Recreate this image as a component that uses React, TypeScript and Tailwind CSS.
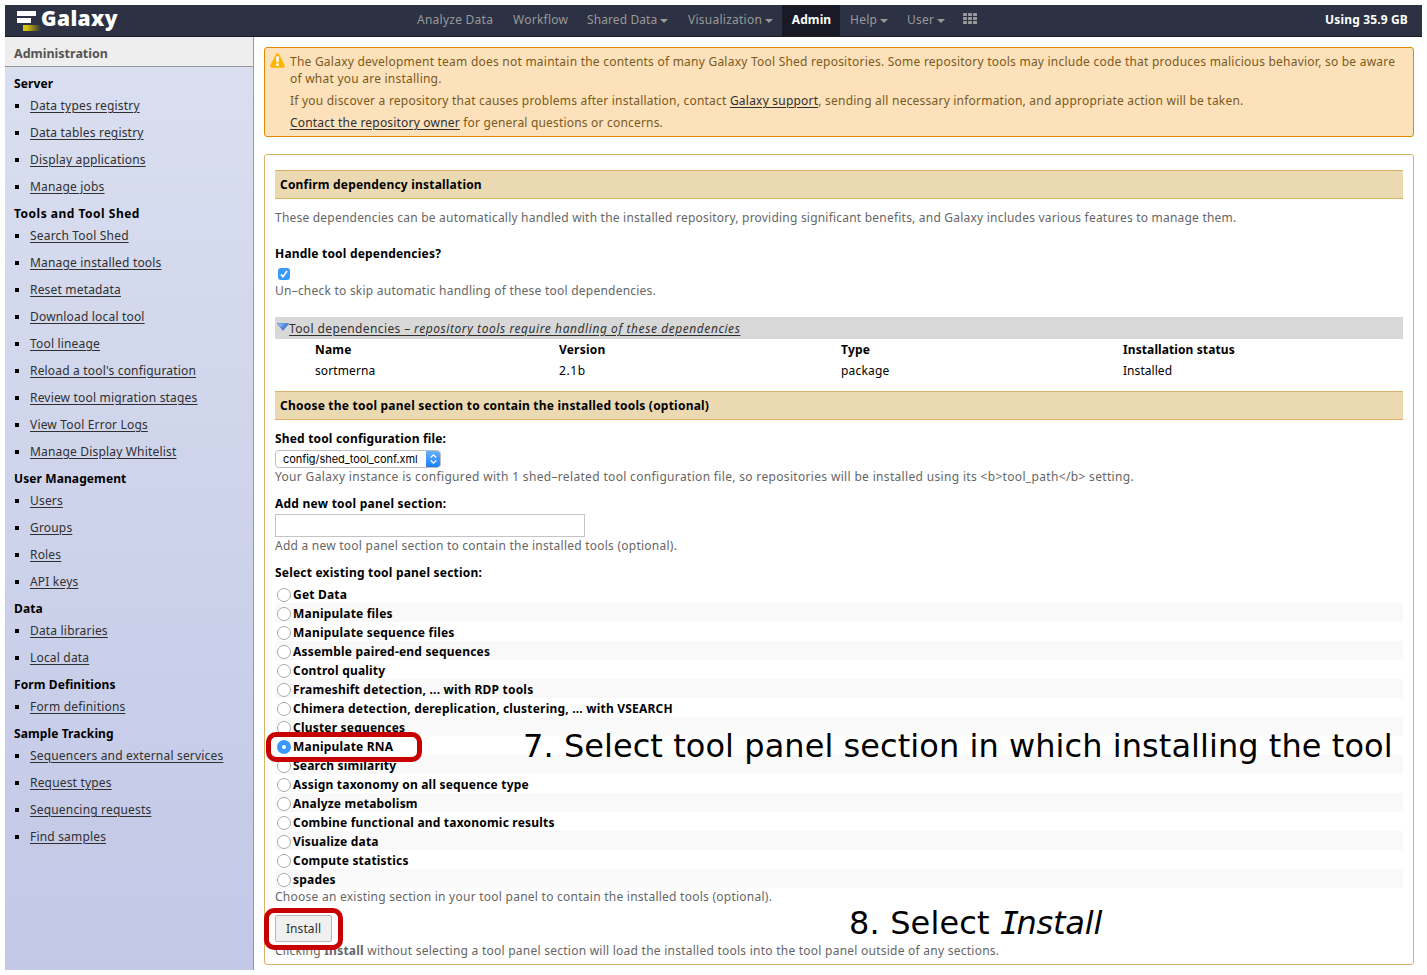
import React from "react";

const sections: { title: string; items: string[] }[] = [
  { title: "Server", items: ["Data types registry", "Data tables registry", "Display applications", "Manage jobs"] },
  {
    title: "Tools and Tool Shed",
    items: [
      "Search Tool Shed",
      "Manage installed tools",
      "Reset metadata",
      "Download local tool",
      "Tool lineage",
      "Reload a tool's configuration",
      "Review tool migration stages",
      "View Tool Error Logs",
      "Manage Display Whitelist",
    ],
  },
  { title: "User Management", items: ["Users", "Groups", "Roles", "API keys"] },
  { title: "Data", items: ["Data libraries", "Local data"] },
  { title: "Form Definitions", items: ["Form definitions"] },
  {
    title: "Sample Tracking",
    items: ["Sequencers and external services", "Request types", "Sequencing requests", "Find samples"],
  },
];

const panelSections = [
  "Get Data",
  "Manipulate files",
  "Manipulate sequence files",
  "Assemble paired-end sequences",
  "Control quality",
  "Frameshift detection, ... with RDP tools",
  "Chimera detection, dereplication, clustering, ... with VSEARCH",
  "Cluster sequences",
  "Manipulate RNA",
  "Search similarity",
  "Assign taxonomy on all sequence type",
  "Analyze metabolism",
  "Combine functional and taxonomic results",
  "Visualize data",
  "Compute statistics",
  "spades",
];

const link = "text-[#303030] underline underline-offset-2 decoration-1";

function Caret() {
  return (
    <span className="mt-[2px] ml-[3px] h-0 w-0 border-x-[4px] border-t-4 border-x-transparent border-t-[#999]" />
  );
}

function Logo() {
  return (
    <svg width="26" height="22" viewBox="0 0 26 22" className="mt-[5px] ml-[11px] shrink-0">
      <defs>
        <linearGradient id="gold" x1="0" x2="1">
          <stop offset="0.2" stopColor="#d6c40a" />
          <stop offset="1" stopColor="#2c3143" />
        </linearGradient>
      </defs>
      <rect x="1" y="1" width="19" height="5" fill="#fff" />
      <rect x="1" y="8" width="14" height="5" fill="#fff" />
      <rect x="7" y="15" width="18" height="6" fill="url(#gold)" />
    </svg>
  );
}

function Masthead() {
  return (
    <header className="flex h-8 shrink-0 border-b border-[#191a26] bg-[#2c3143] text-[#999]">
      <div className="flex w-[400px]">
        <Logo />
        <span className="-mt-px -ml-px font-['Open_Sans'] text-[21px] leading-[29px] font-extrabold tracking-[0.4px] text-white">
          Galaxy
        </span>
      </div>
      <nav className="flex text-[12px] leading-[30px] tracking-[0.25px]">
        <span className="w-[96px] pl-3">Analyze Data</span>
        <span className="w-[74px] pl-3">Workflow</span>
        <span className="flex h-[30px] w-[100px] items-center pl-3 tracking-[0.1px]">Shared Data<Caret /></span>
        <span className="flex h-[30px] w-[107px] items-center pl-[13px]">Visualization<Caret /></span>
        <span className="h-[31px] w-[58px] bg-[#191a26] pl-px text-center font-bold tracking-[0.1px] text-white">
          Admin
        </span>
        <span className="flex h-[30px] w-[57px] items-center pl-[10px]">Help<Caret /></span>
        <span className="flex h-[30px] w-[55px] items-center pl-[10px]">User<Caret /></span>
        <svg width="15" height="12" viewBox="0 0 15 12" className="mt-2 ml-[11px]" fill="#999">
          {[0, 5, 10].map((x) =>
            [0, 4, 8].map((y) => <rect key={`${x}-${y}`} x={x} y={y} width="4" height="3" rx="0.5" />),
          )}
        </svg>
      </nav>
      <span className="ml-auto pr-[14px] text-[12px] leading-[30px] font-bold tracking-[0.15px] text-white">
        Using 35.9 GB
      </span>
    </header>
  );
}

function Sidebar() {
  return (
    <aside className="flex w-[249px] shrink-0 flex-col border-r border-[#999] bg-linear-to-b from-[#dadff0] to-[#c2c8e6]">
      <div className="h-[30px] shrink-0 border-b border-[#999] bg-[#eee] pl-[9px] text-[12.5px] leading-[33px] font-bold text-[#555]">
        Administration
      </div>
      <div className="pt-[6px] pl-[9px] leading-[22px]">
        {sections.map((s) => (
          <div key={s.title}>
            <h2 className={s.title.startsWith("Tools") ? "font-bold tracking-[0.5px]" : "font-bold tracking-[0.1px]"}>
              {s.title}
            </h2>
            <ul className="tracking-[0.18px]">
              {s.items.map((i) => (
                <li key={i} className="mb-[5px] flex h-[22px] items-center">
                  <span className="mr-[11px] ml-px size-1 bg-black" />
                  <a className={link}>{i}</a>
                </li>
              ))}
            </ul>
          </div>
        ))}
      </div>
    </aside>
  );
}

function Warning() {
  return (
    <div className="flex h-[90px] rounded-[3px] border border-[#e08b00] bg-[#fce1ba] leading-[17px] tracking-[0.215px] text-[#7a5a21]">
      <svg width="15" height="15" viewBox="0 0 15 15" className="mt-[5px] ml-[5px] shrink-0">
        <path
          d="M7.5 0.3c.8 0 1.3.4 1.7 1.1l5.2 10c.8 1.6.3 3.3-1.4 3.3H2c-1.7 0-2.2-1.7-1.4-3.3l5.2-10C6.2.7 6.7.3 7.5.3z"
          fill="#ffb400"
        />
        <path d="M6 3.5h3l-.3 5.8H6.3zM6.2 10.6h2.6v2.4H6.2z" fill="#fff" />
      </svg>
      <div className="pt-[5px] pl-[5px] whitespace-nowrap">
        <p className="tracking-[0.232px]">
          The Galaxy development team does not maintain the contents of many Galaxy Tool Shed repositories. Some
          repository tools may include code that produces malicious behavior, so be aware
          <br />
          of what you are installing.
        </p>
        <p className="mt-[5px]">
          If you discover a repository that causes problems after installation, contact{" "}
          <a className={link}>Galaxy support</a>, sending all necessary information, and appropriate action will be
          taken.
        </p>
        <p className="mt-[5px] tracking-[0.19px]">
          <a className={link}>Contact the repository owner</a> for general questions or concerns.
        </p>
      </div>
    </div>
  );
}

function TitleBar({ children }: { children: React.ReactNode }) {
  return (
    <h3 className="h-[29px] border-y border-[#d8b365] bg-[#ebd9b2] pl-[5px] leading-[27px] font-bold">{children}</h3>
  );
}

function Radio({ checked }: { checked: boolean }) {
  return checked ? (
    <span className="mt-[2px] mr-[2px] ml-[2px] flex size-[14px] items-center justify-center rounded-full bg-[#3b99fc]">
      <span className="size-1 rounded-full bg-white" />
    </span>
  ) : (
    <span className="mt-[2px] mr-[2px] ml-[2px] size-[14px] rounded-full border border-[#aaa] bg-white" />
  );
}

function InstallForm() {
  return (
    <div className="mt-[17px] h-[811px] rounded-[3px] border border-[#d8b365] px-[10px] pt-[15px] leading-[18px] tracking-[0.2px]">
      <TitleBar>Confirm dependency installation</TitleBar>
      <p className="mt-[10px] tracking-[0.213px] text-[#666]">
        These dependencies can be automatically handled with the installed repository, providing significant benefits,
        and Galaxy includes various features to manage them.
      </p>
      <h4 className="mt-[18px] font-bold">Handle tool dependencies?</h4>
      <div className="mt-[5px] ml-[3px] flex size-3 items-center justify-center rounded-[3px] bg-[#3b99fc]">
        <svg width="8" height="8" viewBox="0 0 8 8" fill="none" stroke="#fff" strokeWidth="1.6">
          <path d="M0.9 4.4l2.1 2.300L7 1" />
        </svg>
      </div>
      <p className="mt-[2px] tracking-[0.23px] text-[#666]">
        Un–check to skip automatic handling of these tool dependencies.
      </p>
      <div className="mt-[17px] flex h-[22px] bg-[#d8d8d8] pl-[2px] leading-[23px]">
        <svg width="12" height="8" viewBox="0 0 12 8" className="mt-[6px]">
          <defs>
            <linearGradient id="tri" x1="0" x2="1" y1="0" y2="0.5">
              <stop offset="0" stopColor="#b4d2f5" />
              <stop offset="1" stopColor="#1c62c8" />
            </linearGradient>
          </defs>
          <path d="M0.3 0.5h11.4L6 7.500z" fill="url(#tri)" stroke="#3c78d0" strokeWidth="0.6" />
        </svg>
        <a className={`${link} tracking-[0.38px]`}>
          Tool dependencies – <i className="tracking-[0.57px]">repository tools require handling of these dependencies</i>
        </a>
      </div>
      <div className="grid h-[52px] grid-cols-[244px_282px_282px_1fr] grid-rows-[21px_21px] pl-10 leading-[21px]">
        <b>Name</b>
        <b>Version</b>
        <b>Type</b>
        <b className="tracking-[0.1px]">Installation status</b>
        <span className="tracking-[0.1px]">sortmerna</span>
        <span className="tracking-[0.6px]">2.1b</span>
        <span>package</span>
        <span className="tracking-[0.05px]">Installed</span>
      </div>
      <TitleBar>
        <span className="tracking-[0.222px]">Choose the tool panel section to contain the installed tools (optional)</span>
      </TitleBar>
      <h4 className="mt-[10px] font-bold tracking-[0.17px]">Shed tool configuration file:</h4>
      <div className="mt-[2px] flex h-[18px] w-[166px] overflow-hidden rounded-[4px] border border-[#c0c0c0] bg-white">
        <span className="flex-1 pl-[7px] font-['Inter'] text-[11px] leading-[16px] tracking-[-0.05px]">
          config/shed_tool_conf.xml
        </span>
        <span className="-my-px -mr-px flex w-[15px] items-center justify-center bg-linear-to-b from-[#6bb3fa] to-[#0a7bff]">
          <svg width="7" height="10" viewBox="0 0 7 10" fill="none" stroke="#fff" strokeWidth="1.3">
            <path d="M0.8 3.5L3.5 0.9l2.7 2.6M0.8 6.5l2.7 2.6 2.7-2.6" />
          </svg>
        </span>
      </div>
      <p className="tracking-[0.33px] text-[#666]">
        Your Galaxy instance is configured with 1 shed–related tool configuration file, so repositories will be
        installed using its &lt;b&gt;tool_path&lt;/b&gt; setting.
      </p>
      <h4 className="mt-[9px] font-bold tracking-[0.24px]">Add new tool panel section:</h4>
      <div className="mt-[1px] h-[23px] w-[310px] border border-[#c4c4c4] bg-white" />
      <p className="tracking-[0.24px] text-[#666]">
        Add a new tool panel section to contain the installed tools (optional).
      </p>
      <h4 className="mt-[9px] font-bold">Select existing tool panel section:</h4>
      <ul className="mt-[2px] font-bold">
        {panelSections.map((name) => (
          <li key={name} className="flex h-[19px] items-center leading-[19px] even:bg-[#f9f9f9]">
            <Radio checked={name === "Manipulate RNA"} />
            <span className="pt-[2px]">{name}</span>
          </li>
        ))}
      </ul>
      <p className="tracking-[0.25px] text-[#666]">
        Choose an existing section in your tool panel to contain the installed tools (optional).
      </p>
      <button className="mt-[9px] block h-[27px] w-[57px] rounded-[2px] border border-[#b8b8b8] bg-[#f0f0f0] leading-[25px] tracking-[0.1px] text-[#303030]">
        Install
      </button>
      <p className="tracking-[0.245px] text-[#666]">
        Clicking <b>Install</b> without selecting a tool panel section will load the installed tools into the tool
        panel outside of any sections.
      </p>
    </div>
  );
}

function Annotations() {
  const text = "absolute font-['DejaVu_Sans'] text-[32px] leading-[40px] whitespace-nowrap text-black";
  return (
    <>
      <div className="absolute top-[732px] left-[266px] h-[30px] w-[156px] rounded-[10px] border-[5px] border-[#c80000]" />
      <div className="absolute top-[908px] left-[264px] h-[42px] w-[79px] rounded-[10px] border-[5px] border-[#c80000]" />
      <div className={`${text} top-[726px] left-[523px] tracking-[0.06px]`}>
        7. Select tool panel section in which installing the tool
      </div>
      <div className={`${text} top-[903px] left-[849px] tracking-[0.15px]`}>
        8. Select{" "}
        <i className="tracking-[-0.2px]">
          <span className="font-['DejaVu_Sans_Mono'] tracking-[-3px]">I</span>nstall
        </i>
      </div>
    </>
  );
}

export default function App() {
  return (
    <div className="relative flex h-[975px] w-[1427px] flex-col bg-white p-[5px] font-['Noto_Sans',sans-serif] text-[12px] text-black">
      <Masthead />
      <div className="flex min-h-0 flex-1">
        <Sidebar />
        <main className="flex-1 pt-[10px] pr-2 pl-[10px]">
          <Warning />
          <InstallForm />
        </main>
      </div>
      <Annotations />
    </div>
  );
}
